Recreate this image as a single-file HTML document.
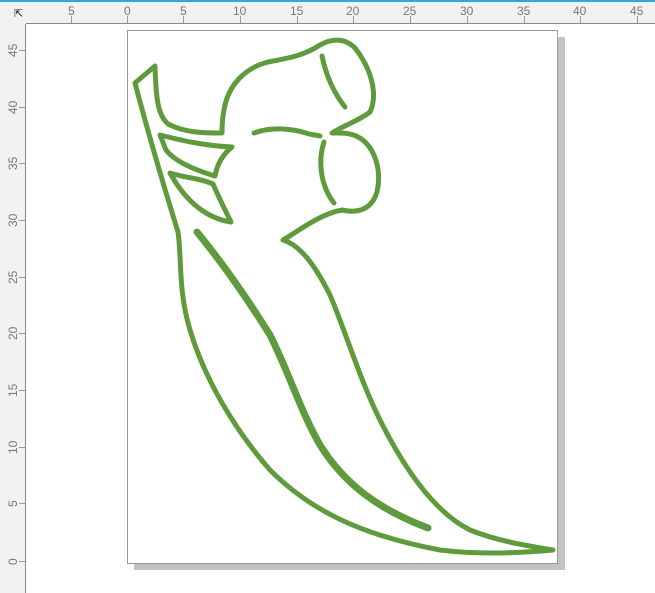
<!DOCTYPE html>
<html><head><style>
html,body{margin:0;padding:0;}
body{width:655px;height:593px;position:relative;overflow:hidden;background:#fff;font-family:"Liberation Sans",sans-serif;}
.top{position:absolute;left:0;top:0;width:655px;height:24px;background:#f2f2f2;border-top:2px solid #3aa3de;box-sizing:border-box;}
.left{position:absolute;left:0;top:24px;width:26px;height:569px;background:#f2f2f2;}
.lab{position:absolute;font-size:12px;color:#777;}
</style></head><body>
<div class="top"></div>
<div class="left"></div>
<svg width="655" height="593" style="position:absolute;left:0;top:0">
<line x1="26" y1="23.5" x2="655" y2="23.5" stroke="#888"/>
<line x1="25.5" y1="24" x2="25.5" y2="593" stroke="#888"/>
<g stroke="#999" stroke-width="1">
<path d="M71.5 16v7M127.5 16v7M183.5 16v7M240.5 16v7M297.5 16v7M353.5 16v7M410.5 16v7M467.5 16v7M524.5 16v7M580.5 16v7M637.5 16v7"/>
<path d="M19 50.5h6M19 107.5h6M19 163.5h6M19 220.5h6M19 277.5h6M19 333.5h6M19 390.5h6M19 447.5h6M19 503.5h6M19 561.5h6"/>
</g>
<text x="14" y="17" font-size="11" fill="#222">⇱</text>
<g font-size="12" fill="#777" font-family="Liberation Sans">
<text x="68" y="15">5</text><text x="124" y="15">0</text><text x="180" y="15">5</text><text x="233" y="15">10</text><text x="290" y="15">15</text><text x="346" y="15">20</text><text x="403" y="15">25</text><text x="460" y="15">30</text><text x="517" y="15">35</text><text x="573" y="15">40</text><text x="630" y="15">45</text>
</g>
<g font-size="12" fill="#777" font-family="Liberation Sans">
<text transform="translate(17,57) rotate(-90)">45</text><text transform="translate(17,114) rotate(-90)">40</text><text transform="translate(17,170) rotate(-90)">35</text><text transform="translate(17,227) rotate(-90)">30</text><text transform="translate(17,284) rotate(-90)">25</text><text transform="translate(17,340) rotate(-90)">20</text><text transform="translate(17,397) rotate(-90)">15</text><text transform="translate(17,454) rotate(-90)">10</text><text transform="translate(17,507) rotate(-90)">5</text><text transform="translate(17,565) rotate(-90)">0</text>
</g>
<rect x="134" y="37" width="431" height="533" fill="#c3c3c3"/>
<rect x="127.5" y="30.5" width="430" height="533" fill="#fff" stroke="#999"/>
<g fill="none" stroke="#5f9b3c" stroke-width="5" stroke-linejoin="round" stroke-linecap="round">
<path d="M155 66 L135 83 C150 140 165 190 178 232 C182 260 178 290 190 330 C205 380 235 430 270 470 C310 510 360 535 440 550 C480 555 520 553 553 550 C530 546 500 542 470 530 C440 515 410 480 380 420 C360 380 345 330 330 295 C315 265 300 245 283 240 C300 230 320 214 342 210 C360 214 372 208 377 192 C382 170 375 148 360 138 C350 132 340 133 332 133 C345 125 360 120 370 112 C378 95 372 70 355 48 C345 38 332 38 320 45 C305 55 290 58 268 62 C245 68 228 85 224 110 C222 120 222 128 222 133 C205 133 185 133 168 124 C158 115 156 100 155 66 Z"/>
<path d="M160 135 C180 140 205 146 232 147 C222 155 217 165 215 176 C195 170 175 162 166 150 Z"/>
<path d="M170 173 C185 178 200 178 213 184 C220 200 226 212 231 222 C205 218 185 200 170 173 Z"/>
<path d="M322 56 C326 75 333 92 345 107"/>
<path d="M324 142 C318 160 320 185 334 203"/>
<path d="M254 133 C270 127 290 128 306 133 C312 135 316 135 320 136"/>
</g>
<path d="M197 232 C220 260 245 295 270 335 C290 375 300 410 320 445 C345 485 380 510 428 528" fill="none" stroke="#5f9b3c" stroke-width="7" stroke-linecap="round"/>
</svg>
</body></html>
